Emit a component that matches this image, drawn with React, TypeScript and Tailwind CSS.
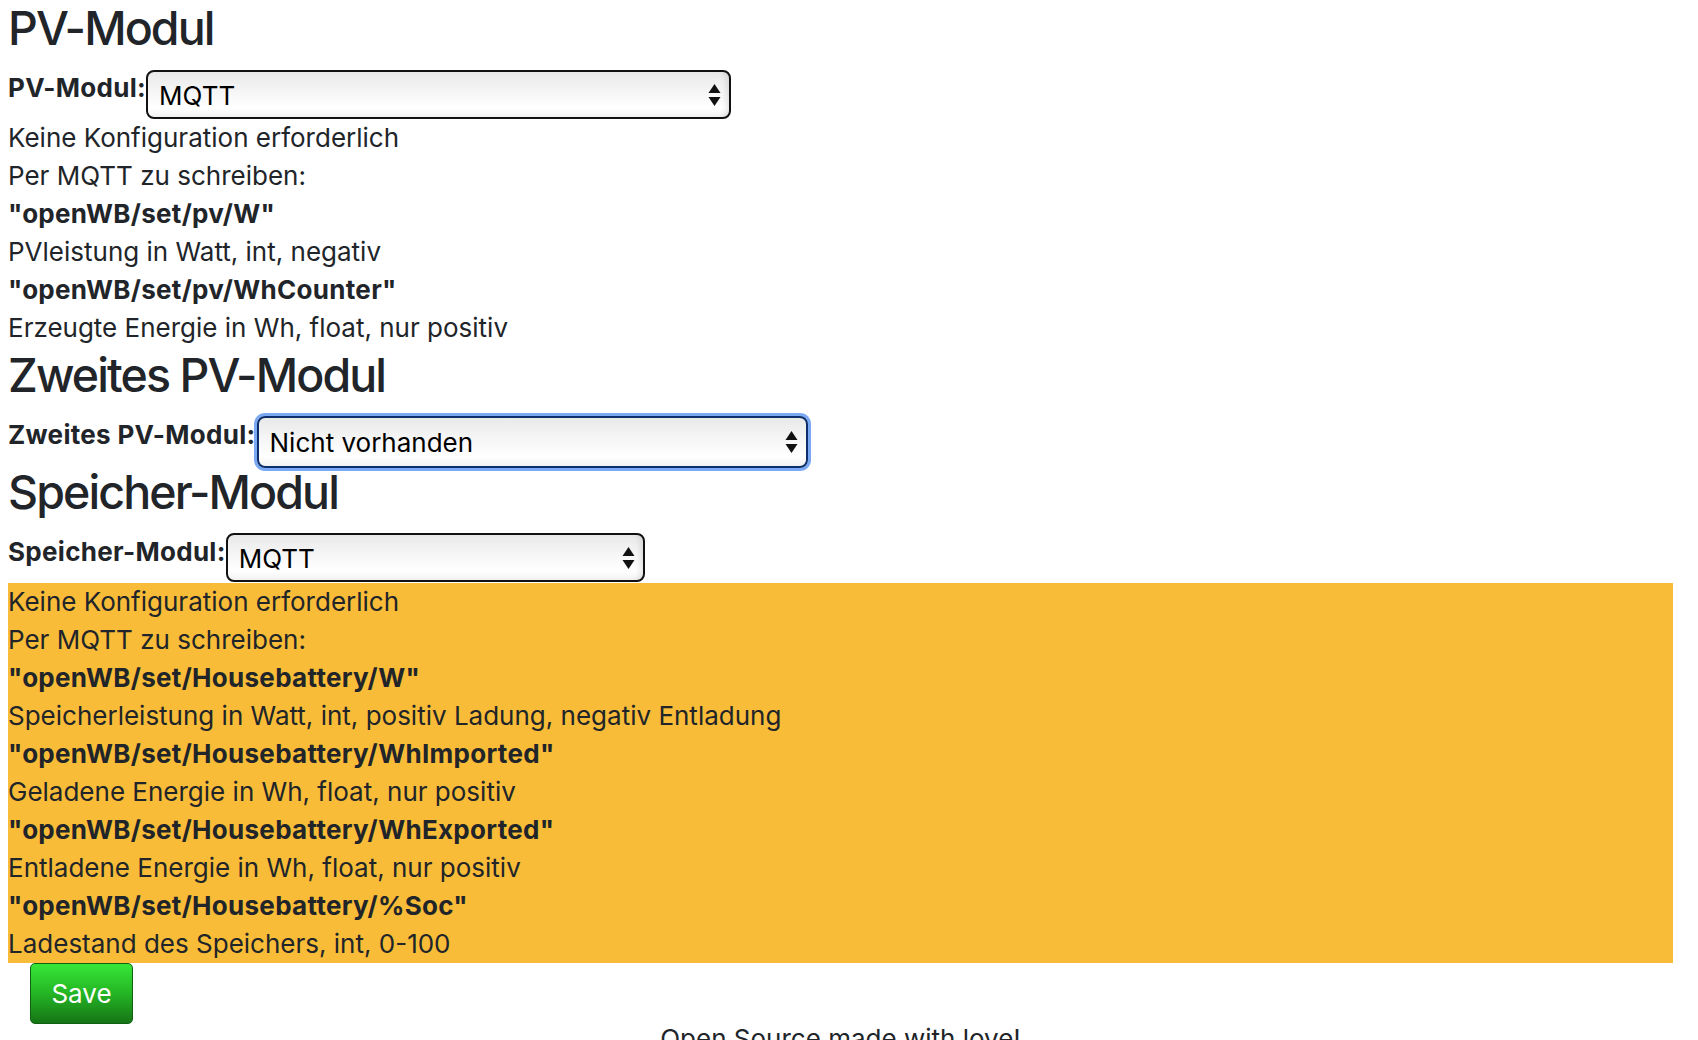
import React from "react";

function Arrows() {
  return (
    <svg width="13" height="24" viewBox="0 0 13 24" className="shrink-0">
      <polygon points="6.5,1 12.5,10 0.5,10" fill="#111" />
      <polygon points="0.5,14 12.5,14 6.5,23" fill="#111" />
    </svg>
  );
}

function FakeSelect({ value, width, focused }: { value: string; width: string; focused?: boolean }) {
  return (
    <div
      className={
        "flex h-[49px] items-center justify-between rounded-[8px] border-2 pl-[11px] pr-[8px] text-[26px] text-black bg-[linear-gradient(to_bottom,#e9e9e9_0%,#f6f6f6_45%,#ffffff_80%,#f2f2f2_100%)] " +
        width +
        (focused
          ? " border-[#0b2f6b] shadow-[0_0_0_3px_#7aa8f3]"
          : " border-[#111111] shadow-[inset_-6px_0_6px_-4px_rgba(0,0,0,0.12)]")
      }
    >
      <span className="leading-none pt-[2px]">{value}</span>
      <Arrows />
    </div>
  );
}

function Lines({ items }: { items: { t: string; b?: boolean }[] }) {
  return (
    <>
      {items.map((it, i) => (
        <div key={i} className={it.b ? "font-bold tracking-[0.3px]" : ""}>
          {it.t}
        </div>
      ))}
    </>
  );
}

const H = "text-[46.5px] leading-[57px] font-medium mb-[9px] tracking-[-1.9px]";

export default function App() {
  return (
    <div className="min-h-screen bg-white text-[#212529] font-['Inter','Noto_Sans',sans-serif] text-[26px] leading-[38px]">
      <div className="ml-[8px] w-[1665px]">
        <h3 className={H}>PV-Modul</h3>
        <div className="flex h-[53px] items-start">
          <label className="font-bold tracking-[0.3px] mt-[3px]">PV-Modul:</label>
          <div className="mt-[4px]">
            <FakeSelect value="MQTT" width="w-[585px]" />
          </div>
        </div>
        <Lines
          items={[
            { t: "Keine Konfiguration erforderlich" },
            { t: "Per MQTT zu schreiben:" },
            { t: '"openWB/set/pv/W"', b: true },
            { t: "PVleistung in Watt, int, negativ" },
            { t: '"openWB/set/pv/WhCounter"', b: true },
            { t: "Erzeugte Energie in Wh, float, nur positiv" },
          ]}
        />
        <h3 className={H}>Zweites PV-Modul</h3>
        <div className="flex h-[51px] items-start">
          <label className="font-bold tracking-[0.3px] mt-[3px]">Zweites PV-Modul:</label>
          <div className="ml-[1px] mt-[3px]">
            <FakeSelect value="Nicht vorhanden" width="w-[551px] h-[52px]" focused />
          </div>
        </div>
        <h3 className={H}>Speicher-Modul</h3>
        <div className="flex h-[53px] items-start">
          <label className="font-bold tracking-[0.3px] mt-[3px]">Speicher-Modul:</label>
          <div className="mt-[3px]">
            <FakeSelect value="MQTT" width="w-[419px]" />
          </div>
        </div>
        <div className="bg-[#f8bc38]">
          <Lines
            items={[
              { t: "Keine Konfiguration erforderlich" },
              { t: "Per MQTT zu schreiben:" },
              { t: '"openWB/set/Housebattery/W"', b: true },
              { t: "Speicherleistung in Watt, int, positiv Ladung, negativ Entladung" },
              { t: '"openWB/set/Housebattery/WhImported"', b: true },
              { t: "Geladene Energie in Wh, float, nur positiv" },
              { t: '"openWB/set/Housebattery/WhExported"', b: true },
              { t: "Entladene Energie in Wh, float, nur positiv" },
              { t: '"openWB/set/Housebattery/%Soc"', b: true },
              { t: "Ladestand des Speichers, int, 0-100" },
            ]}
          />
        </div>
        <div className="pl-[22px]">
          <button className="h-[61px] w-[103px] rounded-[5px] border border-[#0f6010] bg-[linear-gradient(to_bottom,#37e737_0%,#24b524_50%,#157515_100%)] text-white text-[26px] leading-none">
            Save
          </button>
        </div>
        <div className="-mt-[4px] text-center">Open Source made with love!</div>
      </div>
    </div>
  );
}
